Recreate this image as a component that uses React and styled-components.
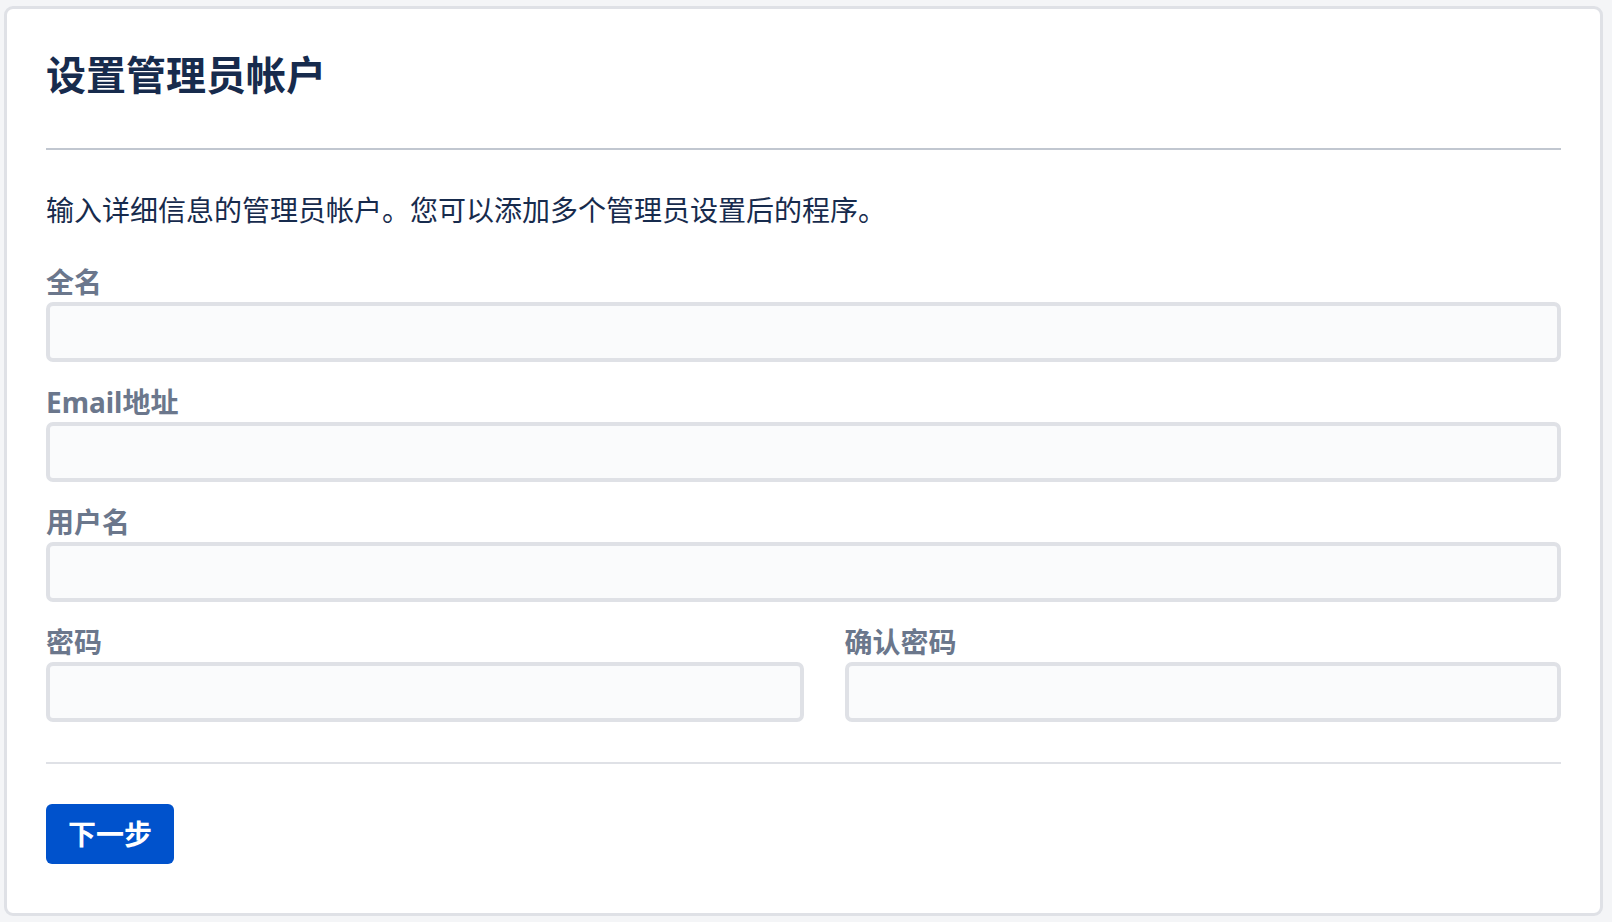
import styled, { createGlobalStyle } from "styled-components";

const GlobalStyle = createGlobalStyle`
  html, body {
    margin: 0;
    padding: 0;
    background: #f4f5f7;
  }
  body {
    font-family: "Noto Sans", "Noto Sans CJK SC", sans-serif;
  }
  * {
    box-sizing: border-box;
  }
`;

const Page = styled.div`
  padding: 6px 9px 9px 4px;
`;

const Card = styled.section`
  background: #ffffff;
  border: 3px solid #dfe1e6;
  border-radius: 9px;
  padding: 42px 39px 49px 39px;
`;

const Header = styled.header`
  padding-bottom: 49px;
  border-bottom: 2px solid #c1c7d0;
`;

const Title = styled.h1`
  margin: 0;
  font-size: 40px;
  line-height: 48px;
  font-weight: 700;
  color: #172b4d;
`;

const Intro = styled.p`
  margin: 44px 0 0;
  font-size: 28px;
  line-height: 32px;
  color: #172b4d;
`;

const Form = styled.form`
  display: flex;
  flex-direction: column;
`;

const Field = styled.div`
  display: flex;
  flex-direction: column;
  margin-top: ${(p) => (p.$first ? "40px" : "24px")};
  flex: ${(p) => (p.$half ? "0 0 50%" : "1")};
  min-width: 0;
`;

const Row = styled.div`
  display: flex;
  gap: 41px;
`;

const Label = styled.label`
  font-size: 28px;
  line-height: 32px;
  font-weight: 700;
  color: #6b778c;
  margin-bottom: 4px;
`;

const Input = styled.input`
  height: 60px;
  width: 100%;
  border: 4px solid #dfe1e6;
  border-radius: 7px;
  background: #fafbfc;
  padding: 0 16px;
  font-size: 28px;
  font-family: inherit;
  color: #172b4d;
  outline: none;
`;

const Footer = styled.div`
  margin-top: 40px;
  padding-top: 40px;
  border-top: 2px solid #dfe1e6;
`;

const Button = styled.button`
  height: 60px;
  padding: 0 22px;
  border: none;
  border-radius: 6px;
  background: #0052cc;
  color: #ffffff;
  font-family: inherit;
  font-size: 28px;
  font-weight: 700;
  line-height: 1;
  cursor: pointer;
`;

export default function App() {
  return (
    <Page>
      <GlobalStyle />
      <Card>
        <Header>
          <Title>设置管理员帐户</Title>
        </Header>
        <Intro>输入详细信息的管理员帐户。您可以添加多个管理员设置后的程序。</Intro>
        <Form onSubmit={(e) => e.preventDefault()}>
          <Field $first>
            <Label>全名</Label>
            <Input type="text" />
          </Field>
          <Field>
            <Label>Email地址</Label>
            <Input type="email" />
          </Field>
          <Field>
            <Label>用户名</Label>
            <Input type="text" />
          </Field>
          <Row>
            <Field $half>
              <Label>密码</Label>
              <Input type="password" />
            </Field>
            <Field>
              <Label>确认密码</Label>
              <Input type="password" />
            </Field>
          </Row>
          <Footer>
            <Button type="submit">下一步</Button>
          </Footer>
        </Form>
      </Card>
    </Page>
  );
}
